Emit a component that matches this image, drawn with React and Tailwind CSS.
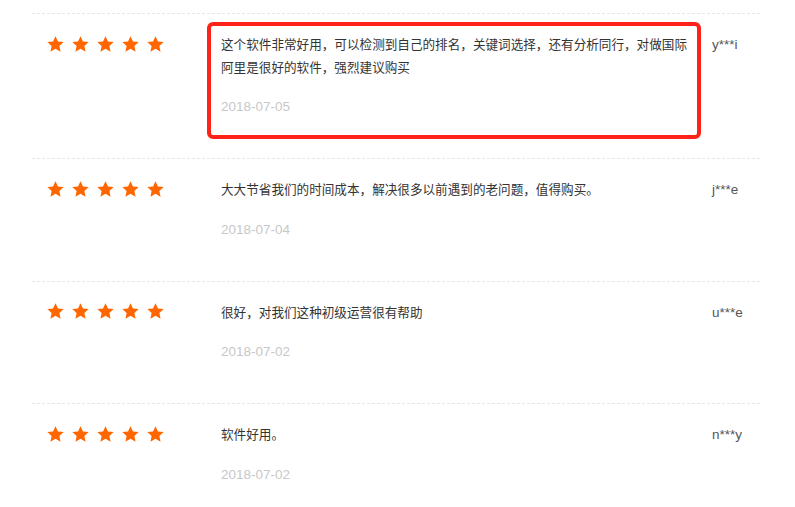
const reviews = [
  {
    text: "这个软件非常好用，可以检测到自己的排名，关键词选择，还有分析同行，对做国际阿里是很好的软件，强烈建议购买",
    date: "2018-07-05",
    user: "y***i",
    marked: true,
  },
  {
    text: "大大节省我们的时间成本，解决很多以前遇到的老问题，值得购买。",
    date: "2018-07-04",
    user: "j***e",
  },
  {
    text: "很好，对我们这种初级运营很有帮助",
    date: "2018-07-02",
    user: "u***e",
  },
  {
    text: "软件好用。",
    date: "2018-07-02",
    user: "n***y",
  },
];

function Star() {
  return (
    <svg viewBox="0 0 24 24" className="w-[19px] h-[19px]" fill="#ff6600">
      <polygon points="12,1.5 15.1,8.1 22.3,8.9 16.9,13.8 18.4,21 12,17.4 5.6,21 7.1,13.8 1.7,8.9 8.9,8.1" />
    </svg>
  );
}

function ReviewRow({ review }) {
  return (
    <div className="relative grid grid-cols-[189px_491px_1fr] border-t border-dashed border-[#e6e6e6] pt-[20px] pb-[40px]">
      <div className="flex gap-[6px] pl-[14px] h-[20px] items-center">
        <Star />
        <Star />
        <Star />
        <Star />
        <Star />
      </div>
      <div className="pr-[21px]">
        <p className="text-[12.6px] leading-[22.5px] text-[#333]">{review.text}</p>
        <p className="mt-[17px] text-[13.5px] leading-[22px] text-[#c8c8c8]">{review.date}</p>
      </div>
      <div className="text-[13.5px] leading-[22px] text-[#555]">{review.user}</div>
      {review.marked && (
        <div className="absolute left-[175px] top-[8px] w-[494px] h-[117px] rounded-[6px] border-[4px] border-[#ff2219]" />
      )}
    </div>
  );
}

export default function App() {
  return (
    <div
      className="w-[795px] h-[507px] overflow-hidden bg-white pt-[13px] pl-[32px]"
      style={{ fontFamily: '"Liberation Sans", "Noto Sans CJK SC", sans-serif' }}
    >
      <div className="w-[728px]">
        {reviews.map((r) => (
          <ReviewRow key={r.date + r.user} review={r} />
        ))}
      </div>
    </div>
  );
}
